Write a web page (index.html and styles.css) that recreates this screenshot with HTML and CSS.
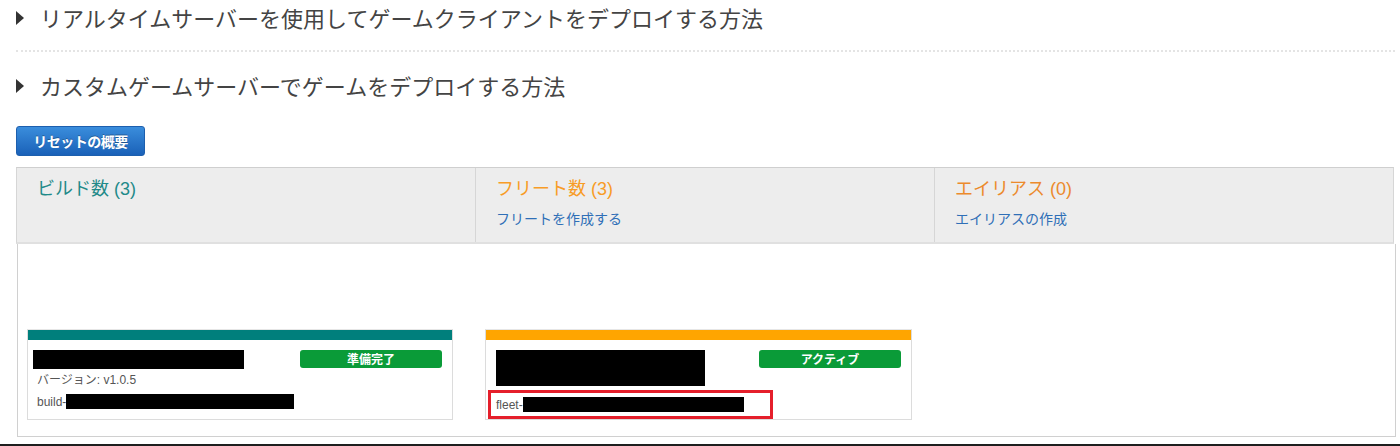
FILE: index.html
```html
<!DOCTYPE html>
<html lang="ja">
<head>
<meta charset="utf-8">
<title>GameLift</title>
<link rel="stylesheet" href="styles.css">
</head>
<body>
<div class="page">
  <div class="expander first">
    <span class="caret"></span>
    <span class="exp-title">リアルタイムサーバーを使用してゲームクライアントをデプロイする方法</span>
  </div>
  <div class="divider"></div>
  <div class="expander second">
    <span class="caret"></span>
    <span class="exp-title">カスタムゲームサーバーでゲームをデプロイする方法</span>
  </div>
  <button class="btn-primary">リセットの概要</button>

  <div class="tabs">
    <div class="tab">
      <div class="tab-title teal">ビルド数 (3)</div>
    </div>
    <div class="tab">
      <div class="tab-title orange">フリート数 (3)</div>
      <a class="tab-link">フリートを作成する</a>
    </div>
    <div class="tab">
      <div class="tab-title orange2">エイリアス (0)</div>
      <a class="tab-link">エイリアスの作成</a>
    </div>
  </div>

  <div class="panel">
    <div class="cards">
      <div class="card">
        <div class="card-bar bar-teal"></div>
        <div class="card-body body-build">
          <div class="card-head">
            <span class="redact r-name1"></span>
            <span class="badge">準備完了</span>
          </div>
          <div class="line">バージョン: v1.0.5</div>
          <div class="line">build-<span class="redact r-id1"></span></div>
        </div>
      </div>
      <div class="card">
        <div class="card-bar bar-orange"></div>
        <div class="card-body body-fleet">
          <div class="card-head">
            <span class="redact r-name2"></span>
            <span class="badge">アクティブ</span>
          </div>
          <div class="highlight">
            <div class="line">fleet-<span class="redact r-id2"></span></div>
          </div>
        </div>
      </div>
    </div>
  </div>
  <div class="bottom-rule"></div>
</div>
</body>
</html>
```
FILE: styles.css
```css
html, body {
  margin: 0;
  padding: 0;
  background: #ffffff;
}
body {
  font-family: "Liberation Sans", "Noto Sans CJK JP", sans-serif;
  color: #444;
  width: 1400px;
  height: 446px;
  overflow: hidden;
}
.page {
  padding: 2px 0 0 16px;
  width: 1380px;
}
.expander {
  display: flex;
  align-items: center;
  height: 30px;
}
.caret {
  width: 0;
  height: 0;
  border-top: 7px solid transparent;
  border-bottom: 7px solid transparent;
  border-left: 8px solid #333;
  margin-right: 16px;
  margin-bottom: -1px;
}
.exp-title {
  font-family: "Noto Sans CJK JP", sans-serif;
  font-size: 22px;
  line-height: 30px;
  color: #444;
  letter-spacing: 0;
}
.divider {
  margin-top: 18px;
  width: 1379px;
  border-top: 2px dotted #e4e4e4;
}
.expander.second {
  margin-top: 18px;
}
.btn-primary {
  display: block;
  margin-top: 26px;
  width: 129px;
  height: 30px;
  padding: 0;
  border: 1px solid #1d5fae;
  border-radius: 3px;
  background: linear-gradient(#3a8ddc, #1a61b8);
  color: #fff;
  font-family: "Noto Sans CJK JP", sans-serif;
  font-weight: 700;
  font-size: 14px;
  letter-spacing: -0.5px;
  text-shadow: 0 -1px 0 rgba(0,0,0,0.3);
}
.tabs {
  margin-top: 11px;
  width: 1376px;
  height: 74px;
  display: grid;
  grid-template-columns: 459px 459px 1fr;
  background: #ededed;
  border-top: 1px solid #cfcfcf;
  border-left: 1px solid #d6d6d6;
  border-right: 1px solid #d6d6d6;
  border-bottom: 2px solid #e0e0e0;
  box-sizing: content-box;
}
.tab {
  padding: 8px 20px 0 20px;
  border-right: 1px solid #d6d6d6;
  display: flex;
  flex-direction: column;
}
.tab:last-child {
  border-right: none;
}
.tab-title {
  font-size: 18px;
  line-height: 26px;
}
.teal { color: #1f8a89; }
.orange { color: #f89c26; }
.orange2 { color: #ec8a2c; }
.tab-link {
  margin-top: 7px;
  font-size: 14px;
  line-height: 20px;
  color: #2f6fb7;
}
.panel {
  margin-left: 1px;
  width: 1377px;
  height: 107px;
  padding-top: 85px;
  border-left: 1px solid #d0d0d0;
  border-right: 1px solid #d0d0d0;
  border-bottom: 1px solid #d0d0d0;
  box-sizing: content-box;
}
.cards {
  display: flex;
  gap: 32px;
  padding-left: 9px;
  align-items: flex-start;
}
.card {
  width: 424px;
  border: 1px solid #dcdcdc;
  border-top-color: #e6e6e6;
  background: #fff;
}
.card:last-child {
  width: 425px;
}
.card-bar {
  height: 10px;
}
.bar-teal { background: #007f7c; }
.bar-orange { background: #ffa500; }
.card-body {
  height: 79px;
  box-sizing: border-box;
  padding: 10px 10px 0 9px;
  font-size: 12px;
  color: #555;
}
.body-fleet {
  padding-left: 10px;
}
.card-head {
  display: flex;
  justify-content: space-between;
  align-items: flex-start;
}
.redact {
  display: inline-block;
  background: #000;
  vertical-align: middle;
}
.r-name1 {
  width: 211px;
  height: 19px;
  margin-left: -4px;
}
.r-name2 {
  width: 209px;
  height: 36px;
}
.r-id1 {
  width: 228px;
  height: 15px;
  margin-top: -2px;
}
.r-id2 {
  width: 221px;
  height: 15px;
  margin-top: -2px;
}
.badge {
  width: 142px;
  height: 18px;
  line-height: 18px;
  border-radius: 3px;
  background: #0a9b38;
  color: #fff;
  font-family: "Noto Sans CJK JP", sans-serif;
  font-weight: 700;
  font-size: 12px;
  text-align: center;
}
.line {
  height: 22px;
  line-height: 22px;
  white-space: nowrap;
}
.highlight {
  margin-top: 4px;
  margin-left: -8px;
  width: 285px;
  height: 29px;
  box-sizing: border-box;
  border: 3px solid #e51f2b;
  padding-left: 5px;
  display: flex;
  align-items: center;
}
.bottom-rule {
  margin-left: -16px;
  margin-top: 7px;
  width: 1400px;
  height: 2px;
  background: #1e1e1e;
}
```
